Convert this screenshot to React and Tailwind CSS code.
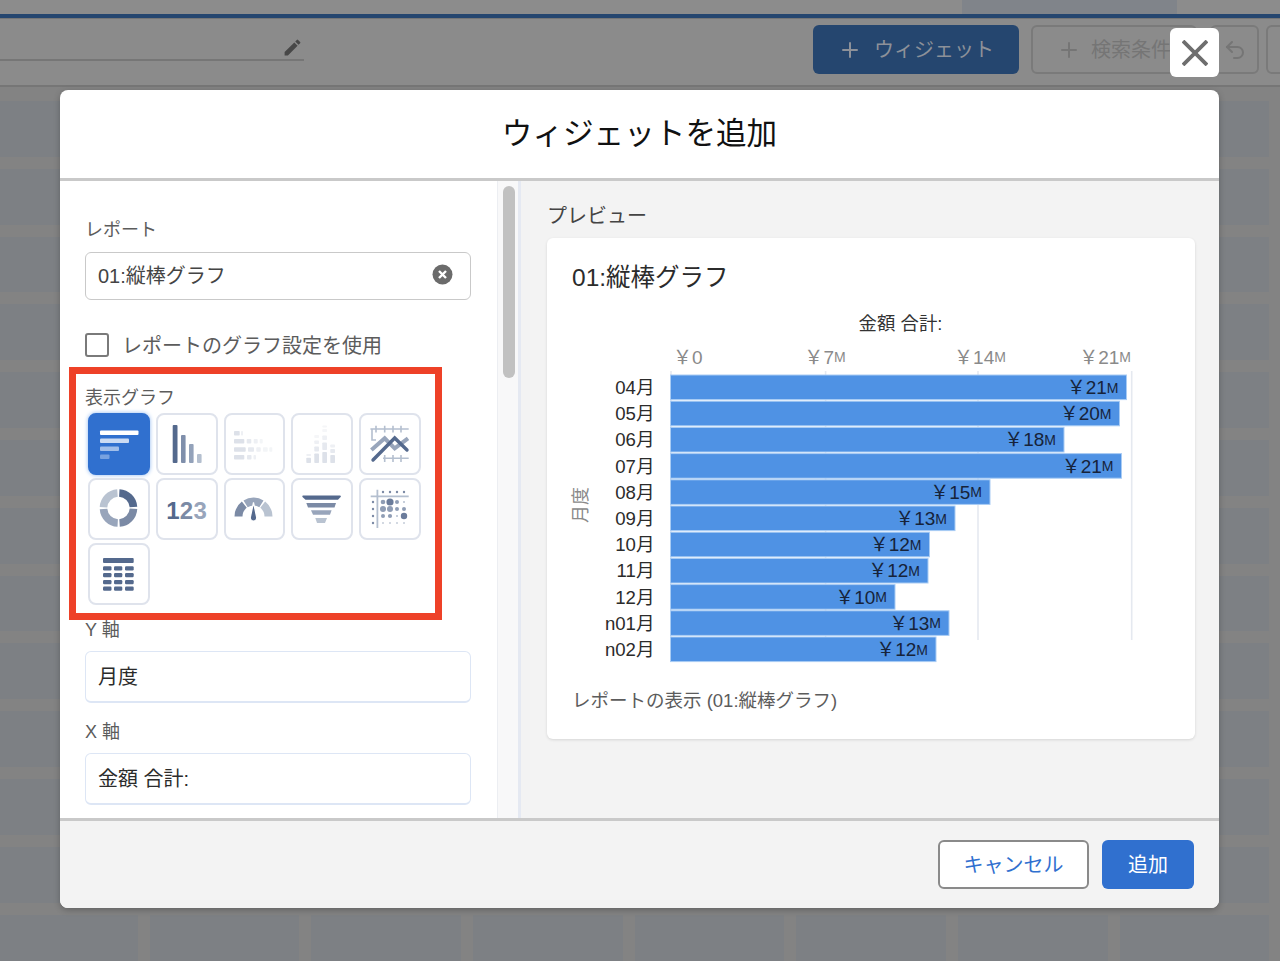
import { Plus, Undo2 } from "lucide-react"

const YEN = "\uFFE5"

const bars = [
    { month: "04月", end: 1126.5, value: "21" },
    { month: "05月", end: 1119.5, value: "20" },
    { month: "06月", end: 1064, value: "18" },
    { month: "07月", end: 1121.5, value: "21" },
    { month: "08月", end: 990, value: "15" },
    { month: "09月", end: 955, value: "13" },
    { month: "10月", end: 929.5, value: "12" },
    { month: "11月", end: 928, value: "12" },
    { month: "12月", end: 895, value: "10" },
    { month: "n01月", end: 949, value: "13" },
    { month: "n02月", end: 936, value: "12" },
]

function Tile({ active, children }) {
    return (
        <div className={`w-[61.75px] h-[62px] rounded-lg border-2 flex items-center justify-center ${active ? "bg-[#3070cf] border-[#3070cf] shadow-[0_0_4px_#8fb8f0]" : "bg-white border-[#dfe3ec]"}`}>
            {children}
        </div>
    )
}

// all tile drawings use the tile's own 62x62 box, the svg sits over the 2px border
function Glyph({ children }) {
    return (
        <svg width="62" height="62" viewBox="0 0 62 62" className="shrink-0 -m-[2px]">
            {children}
        </svg>
    )
}

function Cells({ rows, color, h }) {
    return rows.map(([x1, x2, y], i) => (
        <rect key={i} x={x1} y={y} width={x2 - x1} height={h || 4.6} rx="0.8" fill={color[i] || color[0]} />
    ))
}

function HBarIcon() {
    return (
        <Glyph>
            <rect x="12" y="17.5" width="38.5" height="4.5" rx="1" fill="#fff" />
            <rect x="12" y="25.5" width="29" height="4.5" rx="1" fill="#fff" fillOpacity=".75" />
            <rect x="12" y="33.5" width="19" height="4.5" rx="1" fill="#fff" fillOpacity=".55" />
            <rect x="12" y="41.5" width="9.5" height="4.5" rx="1" fill="#fff" fillOpacity=".35" />
        </Glyph>
    )
}

function VBarIcon() {
    return (
        <Glyph>
            <rect x="16.7" y="12" width="4.8" height="38" rx="1" fill="#54698d" />
            <rect x="25" y="22" width="4.6" height="28" rx="1" fill="#7f8fab" />
            <rect x="33" y="31" width="4.6" height="19" rx="1" fill="#93a2ba" />
            <rect x="41" y="41" width="4.6" height="9" rx="1" fill="#b4bfcf" />
        </Glyph>
    )
}

function HeatRowsIcon() {
    const a = "#dde1e9"
    const b = "#e6e9ef"
    const c = "#eef0f4"
    const d = "#f3f5f7"
    return (
        <Glyph>
            <Cells color={[a, c]} rows={[[11, 16.7, 18], [18, 20, 18]]} />
            <Cells color={[a, b, c, d]} rows={[[11, 21.3, 26], [23.7, 28.3, 26], [30.7, 34.7, 26], [36.7, 39.7, 26]]} />
            <Cells color={[a, b, c, d, d]} rows={[[11, 22.7, 34.2], [25, 31, 34.2], [33.3, 37.7, 34.2], [40, 44.7, 34.2], [46.3, 49.3, 34.2]]} />
            <Cells color={[a, b, c]} rows={[[11, 21.3, 42], [24, 28.5, 42], [30.5, 33, 42]]} />
        </Glyph>
    )
}

function HeatColsIcon() {
    const a = "#dde1e9"
    const b = "#e6e9ef"
    const c = "#eef0f4"
    const d = "#f5f6f8"
    const col = (x, cells) => cells.map(([y1, y2, fill], i) => (
        <rect key={x + "-" + i} x={x} y={y1} width="4.7" height={y2 - y1} rx="0.8" fill={fill} />
    ))
    return (
        <Glyph>
            {col(15.3, [[41, 43, c], [44.7, 50, a]])}
            {col(23.3, [[22, 25, d], [27.5, 31, c], [33.5, 38.5, b], [40.5, 50, a]])}
            {col(31.3, [[12.5, 14.5, d], [16, 19, d], [22.5, 27, c], [29.5, 37, b], [39, 50, a]])}
            {col(39.3, [[31.5, 34.5, c], [36, 40, b], [42, 50, a]])}
        </Glyph>
    )
}

function LineIcon() {
    return (
        <Glyph>
            <g stroke="#b4bfcf" strokeWidth="1.6" fill="none">
                <path d="M11.4 16H49.7M17 12.7V19.5M25.7 12.7V19.5M34 12.7V19.5M42 12.7V19.5" />
                <path d="M13 16V27H17" />
                <path d="M24 45.3H49.7M25.7 42V49M34 42V49M42 42V49" />
            </g>
            <path d="M12.4 37L25.7 25.3L35.7 35.3L49 25.3" stroke="#98a5bb" strokeWidth="4" fill="none" />
            <path d="M14 47L35.7 25L48 37" stroke="#54698d" strokeWidth="3.4" strokeLinecap="round" fill="none" />
        </Glyph>
    )
}

function DonutIcon() {
    const seg = [["#54698d", -87], ["#7b8aa5", 3], ["#98a5bb", 93], ["#b9c3d1", 183]]
    return (
        <Glyph>
            {seg.map(([stroke, angle]) => (
                <circle
                    key={angle}
                    cx="30.5"
                    cy="30"
                    r="15"
                    fill="none"
                    stroke={stroke}
                    strokeWidth="7.6"
                    pathLength="100"
                    strokeDasharray="23 77"
                    transform={`rotate(${angle} 30.5 30)`}
                />
            ))}
        </Glyph>
    )
}

function GaugeIcon() {
    return (
        <Glyph>
            <g fill="none" strokeWidth="8">
                <path d="M15.5 38.5A15 15 0 0 1 21.3 26.7" stroke="#7b8aa5" />
                <path d="M22.6 25.8A15 15 0 0 1 38.4 25.8" stroke="#98a5bb" />
                <path d="M39.7 26.7A15 15 0 0 1 45.5 38.5" stroke="#b9c3d1" />
            </g>
            <path d="M30.5 24.5L33.6 39A3.2 3.2 0 1 1 27.4 39Z" fill="#54698d" stroke="#fff" strokeWidth="1.2" />
        </Glyph>
    )
}

function FunnelIcon() {
    return (
        <Glyph>
            <path d="M12 17.5H49a1 1 0 0 1 .6 1.6L47 21.7H14.5L11.5 19a1 1 0 0 1 .5-1.5Z" fill="#54698d" />
            <path d="M15.3 25H45L43.5 29.4H17Z" fill="#7b8aa5" />
            <path d="M20 32.3H40.6L39 36.7H22Z" fill="#98a5bb" />
            <path d="M24.3 40H36L34 45H26Z" fill="#b9c3d1" />
        </Glyph>
    )
}

function MatrixIcon() {
    const dots = [
        [2.3, 3.6, 2, 1],
        [3, 3, 2, 2],
        [2, 2.1, 1, 3.2],
        [1, 1, 1, 1],
    ]
    const xs = [24, 31, 38, 45]
    const ys = [24, 31, 38, 45]
    return (
        <Glyph>
            <path d="M11.7 18.3H49.7M18.4 11.7V50" stroke="#b4bfcf" strokeWidth="1.8" fill="none" />
            {xs.map((x) => <circle key={x} cx={x} cy="14" r="1.2" fill="#7b8aa5" />)}
            {ys.map((y) => <circle key={y} cx="14" cy={y} r="1.2" fill="#7b8aa5" />)}
            {dots.map((row, r) => row.map((size, c) => (
                <circle
                    key={r + "-" + c}
                    cx={xs[c]}
                    cy={ys[r]}
                    r={size}
                    fill={size > 3.1 ? "#6b7c9b" : r == 3 ? "#c4ccd9" : size < 1.5 ? "#b4bfcf" : "#8f9db5"}
                />
            )))}
        </Glyph>
    )
}

function TableIcon() {
    const ys = [23.3, 30, 37, 43.6]
    const xs = [[15, 8.5], [26, 8.3], [37, 8.7]]
    return (
        <Glyph>
            <rect x="15" y="15" width="30.7" height="5" rx="1" fill="#54698d" />
            {ys.map((y) => xs.map(([x, w]) => (
                <rect key={y + "-" + x} x={x} y={y} width={w} height="4.2" rx="1.2" fill="#54698d" />
            )))}
        </Glyph>
    )
}

function Chart() {
    return (
        <svg viewBox="547 305 648 365" className="block w-[648px] h-[365px]">
            <text x="900.5" y="323.5" textAnchor="middle" dominantBaseline="central" fontSize="18.4" fill="#333">金額 合計:</text>

            <text x="673" y="357" dominantBaseline="central" fontSize="19" fill="#8a8a8a">{YEN}0</text>
            <text x="825" y="357" textAnchor="middle" dominantBaseline="central" fontSize="19" fill="#8a8a8a">{YEN}7<tspan fontSize="14">M</tspan></text>
            <text x="980" y="357" textAnchor="middle" dominantBaseline="central" fontSize="19" fill="#8a8a8a">{YEN}14<tspan fontSize="14">M</tspan></text>
            <text x="1131" y="357" textAnchor="end" dominantBaseline="central" fontSize="19" fill="#8a8a8a">{YEN}21<tspan fontSize="14">M</tspan></text>

            <path d="M671 371V640M825.6 371V640M978 371V640M1131.7 371V640" stroke="#e5e9f0" strokeWidth="1.6" fill="none" />

            {bars.map((bar, i) => {
                const y = 375 + i * 26.2
                return (
                    <g key={bar.month}>
                        <rect x="670.5" y={y} width={bar.end - 670.5} height="24.6" fill="#4f92e4" stroke="#a9ccf4" strokeWidth="1" />
                        <text x="654.5" y={y + 12.5} textAnchor="end" dominantBaseline="central" fontSize="18.6" fill="#2b2b2b">{bar.month}</text>
                        <text x={bar.end - 8} y={y + 12.5} textAnchor="end" dominantBaseline="central" fontSize="19" fill="#16233a">{YEN}{bar.value}<tspan fontSize="14">M</tspan></text>
                    </g>
                )
            })}

            <text x="581" y="505" textAnchor="middle" dominantBaseline="central" fontSize="18" fill="#8a8a8a" transform="rotate(-90 581 505)">月度</text>
        </svg>
    )
}

function Field({ label, value }) {
    return (
        <div>
            <div className="pt-[1px] h-[24px] text-[18px] leading-[24px] text-[#5c5c5c]">{label}</div>
            <div className="mt-[10px] w-[386px] h-[52px] flex items-center px-[12px] rounded-md border border-[#dde6f5] border-b-2 bg-white text-[20px] text-[#2b2b2b]">
                {value}
            </div>
        </div>
    )
}

function Backdrop() {
    const cells = Array.from({ length: 8 * 14 })
    return (
        <div className="h-[961px] flex flex-col bg-[#838383] overflow-hidden">
            <div className="h-[14px] shrink-0 bg-[#8c8c8c] flex">
                <div className="ml-[962px] w-[215px] bg-[#80848a]"></div>
            </div>
            <div className="h-[5px] shrink-0 bg-[#25466f] border-b border-[#767676]"></div>
            <div className="h-[68px] shrink-0 bg-[#8b8b8b] border-b-2 border-[#767676] flex items-center">
                <div className="w-[304px] h-[42px] shrink-0 border-b-2 border-[#767676] flex justify-end pr-[1px] pt-[18px] self-start">
                    <svg width="21" height="21" viewBox="0 0 24 24" fill="#474747">
                        <path d="M3 17.25V21h3.75L17.81 9.94l-3.75-3.75L3 17.25zM20.71 7.04a1 1 0 000-1.41l-2.34-2.34a1 1 0 00-1.41 0l-1.83 1.83 3.75 3.75 1.83-1.83z" />
                    </svg>
                </div>
                <div className="ml-[509px] flex shrink-0 self-start mt-[6px]">
                    <div className="w-[206px] h-[49px] rounded-md bg-[#25466f] flex items-center justify-center gap-[12px] text-[20px] text-[#8d9199]">
                        <Plus size={24} />
                        ウィジェット
                    </div>
                    <div className="ml-[12px] w-[166px] h-[49px] rounded-md border-2 border-[#7a7a7a] flex items-center pl-[24px] gap-[10px] text-[20px] text-[#757575]">
                        <Plus size={24} />
                        検索条件
                    </div>
                    <div className="ml-[13px] w-[49px] h-[49px] rounded-md border-2 border-[#7a7a7a] flex items-center justify-center text-[#757575]">
                        <Undo2 size={24} />
                    </div>
                    <div className="ml-[7px] w-[49px] h-[49px] rounded-md border-2 border-[#7a7a7a]"></div>
                </div>
            </div>
            <div className="mt-[14px] -ml-[12px] grid grid-cols-[repeat(8,149.67px)] auto-rows-[55.8px] gap-x-[12px] gap-y-[12px]">
                {cells.map((_, i) => <div key={i} className="bg-[#7d8084]"></div>)}
            </div>
        </div>
    )
}

export default function App() {
    return (
        <div className="relative w-[1280px] h-[961px] overflow-hidden font-['Liberation_Sans','Noto_Sans_CJK_JP',sans-serif]">
            <Backdrop />

            <button className="absolute left-[1170px] top-[28px] w-[49px] h-[49px] rounded-md bg-white flex items-center justify-center">
                <svg width="26" height="26" viewBox="0 0 26 26" stroke="#6e6e6e" strokeWidth="3.8">
                    <path d="M1 1L25 25M25 1L1 25" />
                </svg>
            </button>

            <div className="absolute left-[60px] top-[90px] w-[1159px] h-[818px] flex flex-col rounded-lg overflow-hidden bg-white shadow-[0_2px_6px_rgba(0,0,0,0.25)]">
                <div className="h-[91px] shrink-0 border-b-[3px] border-[#c9c9c9] flex items-center justify-center text-[30.6px] text-[#111]">
                    ウィジェットを追加
                </div>

                <div className="h-[637px] shrink-0 flex">
                    <div className="w-[437px] shrink-0 pl-[25px] pt-[36px] overflow-hidden">
                        <div className="h-[25px] text-[18px] leading-[26px] text-[#5c5c5c]">レポート</div>
                        <div className="mt-[10px] w-[386px] h-[48px] flex items-center justify-between pl-[12px] pr-[17px] rounded-md border border-[#c9c9c9] text-[20px] text-[#444]">
                            01:縦棒グラフ
                            <svg width="21" height="21" viewBox="0 0 21 21" className="mb-[4px]">
                                <circle cx="10.5" cy="10.5" r="10" fill="#6b6b6b" />
                                <path d="M7 7L14 14M14 7L7 14" stroke="#fff" strokeWidth="2.4" />
                            </svg>
                        </div>

                        <div className="mt-[33px] h-[24px] flex items-center gap-[13px] text-[20px] leading-[26px] text-[#5c5c5c]">
                            <div className="w-[24px] h-[24px] rounded-[3px] border-2 border-[#7a7a7a] bg-white"></div>
                            <span className="pt-[2px]">レポートのグラフ設定を使用</span>
                        </div>

                        <div className="mt-[10px] -ml-[16px] w-[373px] h-[253px] border-[7px] border-[#ee4128] pl-[9px] pt-[10px]">
                            <div className="text-[18px] leading-[26px] text-[#5c5c5c] pt-[1px] h-[26px]">表示グラフ</div>
                            <div className="mt-[3px] ml-[3px] grid grid-cols-[repeat(5,61.75px)] gap-x-[6px] gap-y-[3px]">
                                <Tile active><HBarIcon /></Tile>
                                <Tile><VBarIcon /></Tile>
                                <Tile><HeatRowsIcon /></Tile>
                                <Tile><HeatColsIcon /></Tile>
                                <Tile><LineIcon /></Tile>
                                <Tile><DonutIcon /></Tile>
                                <Tile>
                                    <span className="pt-[3px] text-[24px] font-bold tracking-[0.2px]">
                                        <span className="text-[#54698d]">1</span>
                                        <span className="text-[#7b8aa5]">2</span>
                                        <span className="text-[#98a5bb]">3</span>
                                    </span>
                                </Tile>
                                <Tile><GaugeIcon /></Tile>
                                <Tile><FunnelIcon /></Tile>
                                <Tile><MatrixIcon /></Tile>
                                <Tile><TableIcon /></Tile>
                            </div>
                        </div>

                        <div className="-mt-[3px]">
                            <Field label="Y 軸" value="月度" />
                        </div>
                        <div className="mt-[16px]">
                            <Field label="X 軸" value="金額 合計:" />
                        </div>
                    </div>

                    <div className="w-[24px] shrink-0 bg-[#f8f8f9] border-l border-[#eceef2] border-r-[3px] border-r-[#e5e9f2] pl-[5px] pt-[5px]">
                        <div className="w-[12px] h-[192px] rounded-full bg-[#c1c1c1]"></div>
                    </div>

                    <div className="flex-1 bg-[#f3f3f3] pl-[26px] pt-[20px]">
                        <div className="h-[28px] pt-[1px] text-[20px] leading-[28px] text-[#444]">プレビュー</div>
                        <div className="mt-[9px] w-[648px] h-[501px] rounded-md bg-white shadow-[0_1px_3px_rgba(0,0,0,0.12)] overflow-hidden">
                            <div className="pl-[25px] pt-[25px] h-[54px] text-[24.5px] leading-[30px] text-[#2b2b2b]">01:縦棒グラフ</div>
                            <div className="mt-[13px]">
                                <Chart />
                            </div>
                            <div className="mt-[17px] pl-[25px] text-[18.5px] leading-[27px] text-[#5c5c5c]">レポートの表示 (01:縦棒グラフ)</div>
                        </div>
                    </div>
                </div>

                <div className="flex-1 border-t-[3px] border-[#c9c9c9] bg-[#f3f3f3] flex justify-end items-start gap-[13px] pt-[19px] pr-[25px]">
                    <button className="w-[151px] h-[49px] rounded-md border-2 border-[#8a8a8a] bg-white text-[20px] text-[#3070cf]">キャンセル</button>
                    <button className="w-[92px] h-[49px] rounded-md bg-[#3070cf] text-[20px] text-white">追加</button>
                </div>
            </div>
        </div>
    )
}
